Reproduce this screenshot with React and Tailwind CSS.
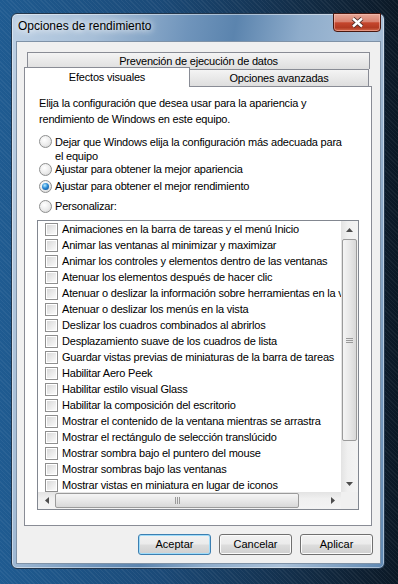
import React from "react";

const font = { fontFamily: '"Liberation Sans", Arial, sans-serif' };

const items = [
  "Animaciones en la barra de tareas y el menú Inicio",
  "Animar las ventanas al minimizar y maximizar",
  "Animar los controles y elementos dentro de las ventanas",
  "Atenuar los elementos después de hacer clic",
  "Atenuar o deslizar la información sobre herramientas en la vista",
  "Atenuar o deslizar los menús en la vista",
  "Deslizar los cuadros combinados al abrirlos",
  "Desplazamiento suave de los cuadros de lista",
  "Guardar vistas previas de miniaturas de la barra de tareas",
  "Habilitar Aero Peek",
  "Habilitar estilo visual Glass",
  "Habilitar la composición del escritorio",
  "Mostrar el contenido de la ventana mientras se arrastra",
  "Mostrar el rectángulo de selección translúcido",
  "Mostrar sombra bajo el puntero del mouse",
  "Mostrar sombras bajo las ventanas",
  "Mostrar vistas en miniatura en lugar de iconos",
];

const Radio = ({ checked }) => (
  <span className="flex h-[13px] w-[13px] shrink-0 items-center justify-center rounded-full border border-[#8e8f8f] bg-[radial-gradient(circle_at_40%_35%,#ffffff_0%,#ebebeb_55%,#cdcdcd_100%)]">
    {checked && (
      <span className="h-[7px] w-[7px] rounded-full bg-[radial-gradient(circle_at_40%_35%,#b9ecff_0%,#2a8ad6_45%,#0c3f7c_100%)]" />
    )}
  </span>
);

const Check = () => (
  <span className="block h-[13px] w-[13px] shrink-0 border border-[#8f8f8f] bg-white p-[1px]">
    <span className="block h-full w-full bg-[linear-gradient(135deg,#d9d9d9_0%,#ededed_60%,#fafafa_100%)]" />
  </span>
);

const Arrow = ({ dir }) => {
  if (dir === "left" || dir === "right") {
    return (
      <svg width="4" height="7" viewBox="0 0 4 7">
        <path d={dir === "left" ? "M4 0 L0 3.5 L4 7 Z" : "M0 0 L4 3.5 L0 7 Z"} fill="#4d4d4d" />
      </svg>
    );
  }
  return (
    <svg width="7" height="4" viewBox="0 0 7 4">
      <path d={dir === "up" ? "M0 4 L3.5 0 L7 4 Z" : "M0 0 L7 0 L3.5 4 Z"} fill="#4d4d4d" />
    </svg>
  );
};

const Button = ({ children, focused }) => (
  <button
    className={
      "flex h-[21px] w-[73px] items-center justify-center rounded-[3px] border text-[11px] text-black bg-[linear-gradient(#f2f2f2_0%,#ebebeb_48%,#dddddd_52%,#cfcfcf_100%)] " +
      (focused
        ? "border-[#3c7fb1] shadow-[inset_0_0_0_1px_#9fdcfa]"
        : "border-[#707070] shadow-[inset_0_0_0_1px_#fbfbfb]")
    }
    style={font}
  >
    {children}
  </button>
);

export default function App() {
  return (
    <div
      className="h-[584px] w-[398px] overflow-hidden pl-[11px] pt-[13px] bg-[repeating-linear-gradient(45deg,rgba(255,255,255,0.05)_0_1px,transparent_1px_3px),linear-gradient(90deg,#1f5b91_0%,#1b4a78_40%,#10253a_85%,#0b1825_100%)]"
      style={font}
    >
      <div className="flex h-[556px] w-[374px] flex-col rounded-[6px] border border-[#22364c] pb-[4px] pl-[4px] pr-[3px] shadow-[inset_0_0_0_1px_rgba(255,255,255,0.45)] bg-[linear-gradient(100deg,#bdd0e4_0%,#a7bfd8_18%,#6f94bb_38%,#5b84ae_48%,#8eaccb_62%,#a9c0d8_78%,#5f88b2_100%)]">
        {/* title bar */}
        <div className="-ml-[4px] -mr-[3px] flex h-[27px] justify-between">
          <div className="pl-[6px] pt-[4px] text-[12px] leading-[16px] text-black [text-shadow:0_0_6px_#fff,0_0_10px_#fff]">
            Opciones de rendimiento
          </div>
          <div className="mr-[3px] -mt-[1px] flex h-[19px] w-[48px] items-center justify-center rounded-b-[4px] border border-[#48170f] shadow-[inset_0_0_0_1px_rgba(255,200,190,0.5)] bg-[linear-gradient(#e6a797_0%,#d98270_45%,#c5462d_52%,#b23a22_80%,#d2694b_100%)]">
            <svg width="13" height="11" viewBox="0 0 13 11">
              <path d="M2 1.5 L11 9.5 M11 1.5 L2 9.5" stroke="#4a2a26" strokeWidth="4.2" />
              <path d="M2 1.5 L11 9.5 M11 1.5 L2 9.5" stroke="#ffffff" strokeWidth="2.4" />
            </svg>
          </div>
        </div>

        {/* client */}
        <div className="flex flex-1 flex-col border border-[#7f92a7] bg-[#f0f0f0] pt-[10px]">
          {/* tabs */}
          <div className="ml-[10px] flex h-[17px] w-[343px] items-center justify-center border border-b-0 border-[#898c95] text-[11px] tracking-[-0.2px] bg-[linear-gradient(#f4f4f4,#e9e9e9_50%,#dedede)]">
            Prevención de ejecución de datos
          </div>
          <div className="ml-[7px] flex h-[17px]">
            <div className="relative z-10 -mt-[2px] flex h-[20px] w-[166px] items-center justify-center border border-b-0 border-[#898c95] bg-white text-[11px] tracking-[-0.2px]">
              Efectos visuales
            </div>
            <div className="-ml-[1px] flex h-[17px] w-[180px] items-center justify-center border border-b-0 border-[#898c95] text-[11px] tracking-[-0.2px] bg-[linear-gradient(#f4f4f4,#e9e9e9_50%,#dedede)]">
              Opciones avanzadas
            </div>
          </div>

          {/* panel */}
          <div className="ml-[7px] flex h-[440px] w-[348px] flex-col border border-[#898c95] bg-white pl-[14px] pt-[8px] text-[11px] tracking-[-0.2px] text-black">
            <p className="leading-[16px]">
              Elija la configuración que desea usar para la apariencia y
              <br />
              rendimiento de Windows en este equipo.
            </p>

            <div className="mt-[8px] flex gap-[3px] leading-[14px]">
              <Radio />
              <span>
                Dejar que Windows elija la configuración más adecuada para
                <br />
                el equipo
              </span>
            </div>
            <div className="mt-[0px] flex items-center gap-[3px] leading-[13px]">
              <Radio />
              <span>Ajustar para obtener la mejor apariencia</span>
            </div>
            <div className="mt-[4px] flex items-center gap-[3px] leading-[13px]">
              <Radio checked />
              <span>Ajustar para obtener el mejor rendimiento</span>
            </div>
            <div className="mt-[7px] flex items-center gap-[3px] leading-[13px]">
              <Radio />
              <span>Personalizar:</span>
            </div>

            {/* list */}
            <div className="-ml-[2px] mt-[7px] flex h-[290px] w-[322px] flex-col border border-[#828790] bg-white">
              <div className="flex h-[271px]">
                <div className="flex-1 overflow-hidden">
                  {items.map((t) => (
                    <div key={t} className="flex h-[16px] items-center gap-[4px] whitespace-nowrap pl-[7px]">
                      <Check />
                      <span>{t}</span>
                    </div>
                  ))}
                </div>
                <div className="flex w-[17px] flex-col bg-[linear-gradient(90deg,#e3e3e3,#f0f0f0_40%,#f3f3f3)]">
                  <div className="flex h-[17px] items-center justify-center">
                    <Arrow dir="up" />
                  </div>
                  <div className="mx-[1px] mt-[1px] flex h-[202px] items-center justify-center rounded-[2px] border border-[#9b9b9b] bg-[linear-gradient(90deg,#f5f5f5,#e8e8e8_50%,#d8d8d8)]">
                    <div className="flex flex-col gap-[1px]">
                      <span className="block h-px w-[7px] bg-[#9a9a9a]" />
                      <span className="block h-px w-[7px] bg-[#9a9a9a]" />
                      <span className="block h-px w-[7px] bg-[#9a9a9a]" />
                    </div>
                  </div>
                  <div className="flex-1" />
                  <div className="flex h-[17px] items-center justify-center">
                    <Arrow dir="down" />
                  </div>
                </div>
              </div>
              <div className="flex h-[17px]">
                <div className="flex flex-1 bg-[linear-gradient(#e3e3e3,#f0f0f0_40%,#f3f3f3)]">
                  <div className="flex w-[17px] items-center justify-center">
                    <Arrow dir="left" />
                  </div>
                  <div className="my-[1px] flex w-[244px] items-center justify-center rounded-[2px] border border-[#9b9b9b] bg-[linear-gradient(#f5f5f5,#e8e8e8_50%,#d8d8d8)]">
                    <div className="flex gap-[1px]">
                      <span className="block h-[7px] w-px bg-[#9a9a9a]" />
                      <span className="block h-[7px] w-px bg-[#9a9a9a]" />
                      <span className="block h-[7px] w-px bg-[#9a9a9a]" />
                    </div>
                  </div>
                  <div className="flex-1" />
                  <div className="flex w-[17px] items-center justify-center">
                    <Arrow dir="right" />
                  </div>
                </div>
                <div className="w-[17px] bg-[#f0f0f0]" />
              </div>
            </div>
          </div>

          {/* buttons */}
          <div className="mt-[8px] flex justify-end gap-[8px] pr-[7px]">
            <Button focused>Aceptar</Button>
            <Button>Cancelar</Button>
            <Button>Aplicar</Button>
          </div>
        </div>
      </div>
    </div>
  );
}
